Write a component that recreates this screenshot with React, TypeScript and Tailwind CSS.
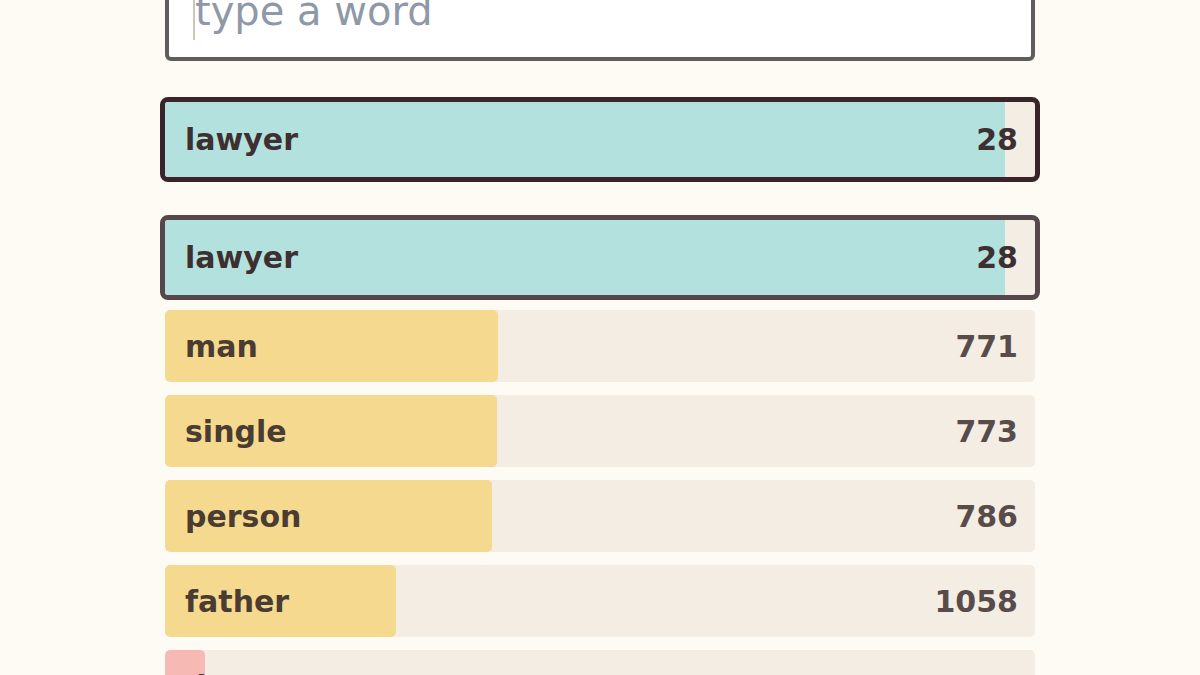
import React from "react";

type Row = { word: string; rank: number; pct: number; color: string };

const rows: Row[] = [
  { word: "man", rank: 771, pct: 38.3, color: "bg-[#f4d98e]" },
  { word: "single", rank: 773, pct: 38.2, color: "bg-[#f4d98e]" },
  { word: "person", rank: 786, pct: 37.6, color: "bg-[#f4d98e]" },
  { word: "father", rank: 1058, pct: 26.6, color: "bg-[#f4d98e]" },
  { word: "doctor", rank: 1130, pct: 4.6, color: "bg-[#f6b9b4]" },
];

function Highlight({ word, rank, pct, border }: { word: string; rank: number; pct: number; border: string }) {
  return (
    <div className={`relative -mx-[5px] h-[85px] overflow-hidden rounded-[8px] border-[5px] bg-[#f3ede3] ${border}`}>
      <div className="absolute inset-y-0 left-0 bg-[#b3e2de]" style={{ width: `${pct}%` }} />
      <div className="relative flex h-full items-center justify-between pl-[20px] pr-[17px] text-[30px] font-bold text-[#3e2f31]">
        <span>{word}</span>
        <span>{rank}</span>
      </div>
    </div>
  );
}

export default function App() {
  return (
    <div className="h-[675px] overflow-hidden bg-[#fefaf4] font-['DejaVu_Sans',sans-serif]">
      <div className="mx-auto -mt-[29px] w-[870px]">
        <div className="relative">
          <input
            type="text"
            placeholder="type a word"
            className="block h-[90px] w-full rounded-[6px] border-4 border-[#5e5e5e] bg-white pb-[22px] pl-[26px] pt-[12px] text-[40px] leading-[48px] text-[#333] outline-none placeholder:text-[#8e98a8]"
          />
          <div className="absolute left-[28px] top-[29px] h-[40px] w-[2px] bg-[#cfc5b8]" />
        </div>

        <div className="mt-[36px]">
          <Highlight word="lawyer" rank={28} pct={96.6} border="border-[#3b2428]" />
        </div>

        <div className="mt-[33px]">
          <Highlight word="lawyer" rank={28} pct={96.6} border="border-[#56474a]" />
        </div>

        <div className="mt-[10px] flex flex-col gap-[13px]">
          {rows.map((r) => (
            <div key={r.word} className="relative h-[72px] overflow-hidden rounded-[5px] bg-[#f3ede3]">
              <div className={`absolute inset-y-0 left-0 rounded-[5px] ${r.color}`} style={{ width: `${r.pct}%` }} />
              <div className="relative flex h-full items-center justify-between pl-[20px] pr-[17px] text-[30px] font-bold text-[#4a3b33]">
                <span>{r.word}</span>
                <span className="text-[#574c4a]">{r.rank}</span>
              </div>
            </div>
          ))}
        </div>
      </div>
    </div>
  );
}
